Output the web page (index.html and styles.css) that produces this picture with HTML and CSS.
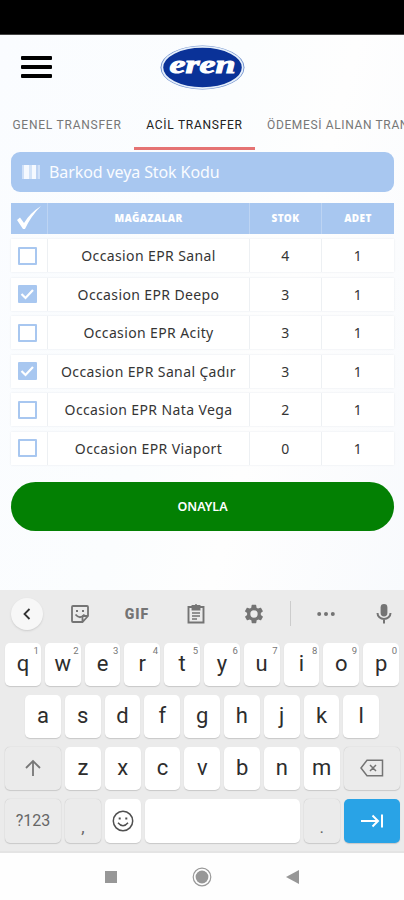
FILE: index.html
```
<!DOCTYPE html>
<html lang="tr">
<head>
<meta charset="utf-8">
<title>Acil Transfer</title>
<link rel="stylesheet" href="styles.css">
</head>
<body>
<div class="status"></div>
<main class="app">
  <header class="top">
    <div class="burger"><i></i><i></i><i></i></div>
    <svg class="logo" width="86" height="46" viewBox="0 0 86 46">
      <ellipse cx="42.500" cy="22.500" rx="42" ry="22" fill="#6f90cd"/>
      <ellipse cx="42.500" cy="22.500" rx="40.200" ry="20.600" fill="#0a3298" stroke="#e6effa" stroke-width="1.800"/>
      <text x="9.500" y="28" textLength="66" lengthAdjust="spacingAndGlyphs">eren</text>
    </svg>
  </header>
  <nav class="tabs">
    <span class="tab t1">GENEL TRANSFER</span>
    <span class="tab t2 active">ACİL TRANSFER</span>
    <span class="tab t3">ÖDEMESİ ALINAN TRANSFER</span>
  </nav>
  <div class="search">
    <svg width="18" height="16" viewBox="0 0 18 16"><path d="M0 1h2v14H0zM16 1h2v14h-2z" fill="#cfe0f8"/><path d="M2 1h5v14H2z" fill="#f5f9ff"/><path d="M7 1h3v14H7z" fill="#d3e3f8"/><path d="M10 1h4v14h-4z" fill="#f5f9ff"/><path d="M14 1h2v14h-2z" fill="#bdd3f3"/></svg>
    <span>Barkod veya Stok Kodu</span>
  </div>
  <section class="table">
    <div class="row head"><div><svg width="26" height="26" viewBox="0 0 26 26"><path d="M1 15l3-2.500 4 5.500Q14 8 25 1Q15 11 9 24H7z" fill="#fff"/></svg></div><div>MAĞAZALAR</div><div>STOK</div><div>ADET</div></div>
    <div class="row"><div><b class="box"></b></div><div><span>Occasion EPR Sanal</span></div><div>4</div><div>1</div></div>
    <div class="row"><div><b class="box on"><svg viewBox="0 0 18 18"><path d="M3.500 9l4 4 7.500-8"/></svg></b></div><div><span>Occasion EPR Deepo</span></div><div>3</div><div>1</div></div>
    <div class="row"><div><b class="box"></b></div><div><span>Occasion EPR Acity</span></div><div>3</div><div>1</div></div>
    <div class="row"><div><b class="box on"><svg viewBox="0 0 18 18"><path d="M3.500 9l4 4 7.500-8"/></svg></b></div><div><span>Occasion EPR Sanal Çadır</span></div><div>3</div><div>1</div></div>
    <div class="row"><div><b class="box"></b></div><div><span>Occasion EPR Nata Vega</span></div><div>2</div><div>1</div></div>
    <div class="row"><div><b class="box"></b></div><div><span>Occasion EPR Viaport</span></div><div>0</div><div>1</div></div>
  </section>
  <div class="submit">ONAYLA</div>
</main>
<section class="keyboard">
  <div class="tools">
    <div class="back"><svg width="32" height="32" viewBox="0 0 32 32"><path d="M18.500 11l-5 5 5 5" fill="none" stroke="#333" stroke-width="1.800"/></svg></div>
    <svg width="20" height="20" viewBox="0 0 20 20" fill="none" stroke="#747474" stroke-width="1.800"><path d="M3 2h14q1 0 1 1v9l-5.500 6H3q-1 0-1-1V3q0-1 1-1zM18 12h-4.500q-1 0-1 1v5"/><path d="M5.500 10.500q4.500 5.500 9 0M6 7h2M12 7h2"/></svg>
    <span class="gif">GIF</span>
    <svg width="20" height="22" viewBox="0 0 20 22" fill="none" stroke="#747474" stroke-width="1.900"><path d="M2.500 4h15v15.500h-15z"/><path d="M6.500 3h7v3.500h-7z" fill="#747474"/><path d="M10 1v3M6 10h8M6 13h8M6 16h5" stroke-width="1.500"/></svg>
    <svg width="22" height="22" viewBox="0 0 24 24"><path fill="#747474" fill-rule="evenodd" d="M19.400 13a7.500 7.500 0 0 0 0-2l2.100-1.600a.5.5 0 0 0 .1-.6l-2-3.500a.5.5 0 0 0-.6-.2l-2.500 1a7.300 7.300 0 0 0-1.700-1l-.4-2.700a.5.5 0 0 0-.5-.4h-4a.5.5 0 0 0-.5.4l-.4 2.700a7.300 7.300 0 0 0-1.700 1l-2.500-1a.5.5 0 0 0-.6.2l-2 3.500a.5.5 0 0 0 .1.600L4.500 11a7.500 7.500 0 0 0 0 2l-2.100 1.600a.5.5 0 0 0-.1.600l2 3.500c.1.200.4.300.6.200l2.500-1a7.300 7.300 0 0 0 1.700 1l.4 2.700c0 .2.200.4.500.4h4c.3 0 .5-.2.500-.4l.4-2.700a7.300 7.300 0 0 0 1.700-1l2.500 1c.2.100.5 0 .6-.2l2-3.500a.5.500 0 0 0-.1-.6zM12 16a4 4 0 1 1 0-8 4 4 0 0 1 0 8z"/></svg>
    <i class="sep"></i>
    <svg width="20" height="6" viewBox="0 0 20 6" fill="#747474"><circle cx="3.200" cy="3" r="2"/><circle cx="10" cy="3" r="2"/><circle cx="16.800" cy="3" r="2"/></svg>
    <svg width="16" height="22" viewBox="0 0 16 22"><rect x="4.600" y="1" width="6.800" height="12.500" rx="3.400" fill="#747474"/><path d="M1.500 10a6.500 6 0 0 0 13 0M8 16v4.500" fill="none" stroke="#747474" stroke-width="2"/></svg>
  </div>
  <div class="keys">
    <div class="key">q<sup>1</sup></div><div class="key">w<sup>2</sup></div><div class="key">e<sup>3</sup></div><div class="key">r<sup>4</sup></div><div class="key">t<sup>5</sup></div><div class="key">y<sup>6</sup></div><div class="key">u<sup>7</sup></div><div class="key">i<sup>8</sup></div><div class="key">o<sup>9</sup></div><div class="key">p<sup>0</sup></div>
  </div>
  <div class="keys mid">
    <div class="key">a</div><div class="key">s</div><div class="key">d</div><div class="key">f</div><div class="key">g</div><div class="key">h</div><div class="key">j</div><div class="key">k</div><div class="key">l</div>
  </div>
  <div class="keys wide">
    <div class="key gray"><svg width="18" height="18" viewBox="0 0 18 18" fill="none" stroke="#777" stroke-width="1.800"><path d="M9 17V2M2 9l7-7 7 7"/></svg></div><div class="key">z</div><div class="key">x</div><div class="key">c</div><div class="key">v</div><div class="key">b</div><div class="key">n</div><div class="key">m</div>
    <div class="key gray"><svg width="24" height="18" viewBox="0 0 24 18" fill="none" stroke="#747474" stroke-width="1.500"><path d="M7 1.200h15.500v15.600H7L1 9zM10 6l6 6M16 6l-6 6"/></svg></div>
  </div>
  <div class="keys last">
    <div class="key gray sym">?123</div><div class="key gray punct">,</div>
    <div class="key"><svg width="22" height="22" viewBox="0 0 22 22" fill="none" stroke="#505050" stroke-width="1.500"><circle cx="11" cy="11" r="9.700"/><path d="M6 12.700q5 6 10 0"/><path d="M6.700 8.500h2M13.300 8.500h2" stroke-width="2"/></svg></div>
    <div class="key"></div><div class="key gray punct">.</div>
    <div class="key enter"><svg width="24" height="16" viewBox="0 0 24 16" fill="none" stroke="#fff" stroke-width="2"><path d="M1 8h17M12.500 2.500L18 8l-5.500 5.500M22 1.500v13"/></svg></div>
  </div>
</section>
<footer class="nav">
  <svg width="12" height="12"><path d="M0 0h12v12H0z" fill="#979797"/></svg>
  <svg width="20" height="20" viewBox="0 0 20 20"><circle cx="10" cy="10" r="8.800" fill="none" stroke="#999" stroke-width="1.200"/><circle cx="10" cy="10" r="6.400" fill="#979797"/></svg>
  <svg width="13" height="14"><path d="M13 0v14L0 7z" fill="#979797"/></svg>
</footer>
</body>
</html>
```
FILE: styles.css
```
* { box-sizing: border-box; }
body { margin: 0; width: 404px; height: 900px; overflow: hidden; background: #fefefe; font-family: Roboto, sans-serif; display: flex; flex-direction: column; }
svg { display: block; flex: none; }
.status { height: 35px; background: #000; border-bottom: 1px solid #444; flex: none; }
.app { height: 555px; flex: none; background: linear-gradient(105deg, #fafcff 0%, #fbfdfe 45%, #fefefe 65%, #f8fafd 100%); }
.top { height: 65px; display: flex; padding: 10px 0 0 21px; }
.burger { width: 31px; padding-top: 11px; margin-right: 108px; display: flex; flex-direction: column; gap: 5px; }
.burger i { height: 4px; border-radius: 1px; background: #000; }
.logo text { font: italic 900 26px "Liberation Serif", serif; fill: #fff; stroke: #fff; stroke-width: 1px; }
.tabs { height: 50px; display: flex; overflow: hidden; white-space: nowrap; font-size: 12px; color: #777; }
.tab { flex: none; height: 50px; line-height: 50px; text-align: center; }
.t1 { width: 134px; letter-spacing: .76px; }
.t2 { width: 121px; letter-spacing: .72px; }
.t3 { padding-left: 12px; letter-spacing: .64px; }
.active { color: #222; border-bottom: 3px solid #e57373; }
.search { height: 40px; margin: 2px 10px 0 11px; border-radius: 9px; background: #a8c7f0; display: flex; align-items: center; padding-left: 11px; gap: 9px; color: #fafcff; font: 16px "Noto Sans", sans-serif; letter-spacing: -.1px; }
.table { margin: 11px 10px 0 11px; }
.row { display: grid; grid-template-columns: 37px 202px 72px 72px; height: 33px; margin-bottom: 5.600px; background: #fff; box-shadow: 0 0 2px #e7eaee; font: 14px "Noto Sans", sans-serif; letter-spacing: .38px; color: #353535; }
.row > div { display: flex; align-items: center; justify-content: center; border-right: 1px solid #edf0f3; }
.row > div:last-child { border-right: 0; }
.row.head { height: 31px; margin-bottom: 5px; background: #a8c7f0; color: #fff; font-size: 10px; font-weight: 900; letter-spacing: .4px; box-shadow: none; }
.row.head > div { border-color: #bdd4f3; padding-bottom: 1px; }
.box { width: 19px; height: 18px; border: 2px solid #a8c7f0; margin-right: 4px; border-radius: 1px; }
.on { background: #a8c7f0; border: 0; }
.on svg { width: 18px; height: 18px; fill: none; stroke: #fff; stroke-width: 2.200px; }
.submit { height: 49px; margin: 16.600px 10px 0 11px; border-radius: 25px; background: #038003; color: #fff; display: flex; align-items: center; justify-content: center; font: 600 12.500px "Noto Sans", sans-serif; }
.keyboard { height: 263px; flex: none; background: #ebebeb; border-bottom: 2px solid #e4e4e4; }
.tools { height: 53px; padding-bottom: 6px; display: grid; grid-template-columns: 53px 53px 62px 56px 60px 12px 60px 56px; align-items: center; justify-items: center; }
.back { width: 32px; height: 32px; border-radius: 50%; background: #f7f7f7; box-shadow: 0 1px 2px #ccc; }
.gif { font-size: 14px; font-weight: 900; color: #747474; letter-spacing: 1px; }
.sep { width: 1px; height: 25px; background: #ccc; }
.keys { display: grid; grid-template-columns: repeat(10, 35.800px); gap: 4px; padding-left: 5px; height: 43px; margin-bottom: 9px; }
.mid { padding-left: 25px; }
.wide { grid-template-columns: 56px repeat(7, 35.800px) 56px; }
.last { grid-template-columns: 56px 35.800px 35.800px 155.300px 35.800px 56px; height: 44px; }
.key { position: relative; display: flex; align-items: center; justify-content: center; padding-bottom: 1px; border-radius: 5px; background: #fff; box-shadow: 0 1px 1px #c8c8c8; font-size: 22px; line-height: 1; color: #2d2d2d; }
.key sup { position: absolute; top: 2px; right: 2px; font-size: 9.500px; line-height: 11px; color: #777; }
.gray { background: #ebebeb; box-shadow: 0 0 1px #bbb, 0 1px 1px #ccc; color: #666; }
.sym { font-size: 16px; }
.punct { padding-top: 13px; font-size: 17px; }
.enter { background: #29a3e6; }
.nav { height: 47px; flex: none; display: grid; grid-template-columns: 12px 20px 13px; justify-content: space-between; padding: 0 105px; align-items: center; }
```
